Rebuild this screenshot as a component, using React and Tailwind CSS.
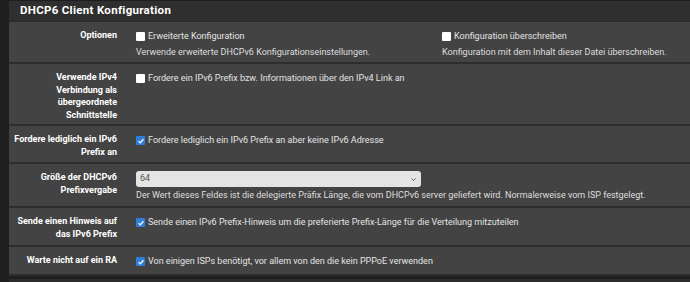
import React from 'react';

const Box = ({ checked }) =>
  checked ? (
    <span className="inline-flex w-[9px] h-[9px] shrink-0 items-center justify-center rounded-[1px] bg-[#2f7fd8]">
      <svg viewBox="0 0 10 10" className="w-[8px] h-[8px]">
        <path d="M2 5.2 L4.1 7.3 L8 2.8" fill="none" stroke="#fff" strokeWidth="1.6" />
      </svg>
    </span>
  ) : (
    <span className="inline-block w-[9px] h-[9px] shrink-0 rounded-[1px] bg-white" />
  );

const Check = ({ checked, children }) => (
  <div className="flex items-center gap-[3px] h-[15px] text-[#e4e4e4] whitespace-nowrap">
    <Box checked={checked} />
    <span>{children}</span>
  </div>
);

const Row = ({ label, pb = 'pb-[4px]', children }) => (
  <div className={`flex pt-[7px] border-b-2 border-[#2d2d2d] ${pb}`}>
    <div className="w-[108px] shrink-0 text-right font-bold text-white leading-[12.5px] whitespace-nowrap">{label}</div>
    <div className="ml-[19px] flex-1 min-w-0">{children}</div>
  </div>
);

const Desc = ({ children }) => (
  <div className="mt-[2px] leading-[13px] text-[#dedede] whitespace-nowrap">{children}</div>
);

export default function App() {
  return (
    <div className="h-screen overflow-hidden bg-[#1e1e1e] pl-[9px] pt-px text-[9px]" style={{ fontFamily: 'Roboto, sans-serif' }}>
      <div className="bg-[#434343]">
        {/* Panel header */}
        <div className="h-[21px] bg-[#2f2f2f] border-b border-[#292929] flex items-center px-[11px]">
          <h2 className="text-[11.5px] font-bold text-white tracking-[0.3px]">DHCP6 Client Konfiguration</h2>
        </div>

        <Row label="Optionen" pb="pb-[3px]">
          <div className="flex">
            <div className="w-[306px] shrink-0">
              <Check>Erweiterte Konfiguration</Check>
              <Desc>Verwende erweiterte DHCPv6 Konfigurationseinstellungen.</Desc>
            </div>
            <div>
              <Check>Konfiguration überschreiben</Check>
              <Desc>Konfiguration mit dem Inhalt dieser Datei überschreiben.</Desc>
            </div>
          </div>
        </Row>

        <Row label={<>Verwende IPv4<br />Verbindung als<br />übergeordnete<br />Schnittstelle</>} pb="pb-[3px]">
          <Check>Fordere ein IPv6 Prefix bzw. Informationen über den IPv4 Link an</Check>
        </Row>

        <Row label={<>Fordere lediglich ein IPv6<br />Prefix an</>}>
          <Check checked>Fordere lediglich ein IPv6 Prefix an aber keine IPv6 Adresse</Check>
        </Row>

        <Row label={<>Größe der DHCPv6<br />Prefixvergabe</>}>
          <div className="w-[285px] h-[16px] rounded-[3px] bg-[#e4e4e4] flex items-center justify-between px-[4px] text-[#555]">
            <span>64</span>
            <svg viewBox="0 0 10 10" className="w-[7px] h-[7px]">
              <path d="M2 3.5 L5 6.5 L8 3.5" fill="none" stroke="#555" strokeWidth="1.3" />
            </svg>
          </div>
          <Desc>Der Wert dieses Feldes ist die delegierte Präfix Länge, die vom DHCPv6 server geliefert wird. Normalerweise vom ISP festgelegt.</Desc>
        </Row>

        <Row label={<>Sende einen Hinweis auf<br />das IPv6 Prefix</>} pb="pb-[5px]">
          <Check checked>Sende einen IPv6 Prefix-Hinweis um die preferierte Prefix-Länge für die Verteilung mitzuteilen</Check>
        </Row>

        <Row label="Warte nicht auf ein RA" pb="pb-[5px]">
          <Check checked>Von einigen ISPs benötigt, vor allem von den die kein PPPoE verwenden</Check>
        </Row>
      </div>

      {/* next panel start */}
      <div className="mt-[3px] h-[10px] bg-[#2b2b2b]" />
    </div>
  );
}
